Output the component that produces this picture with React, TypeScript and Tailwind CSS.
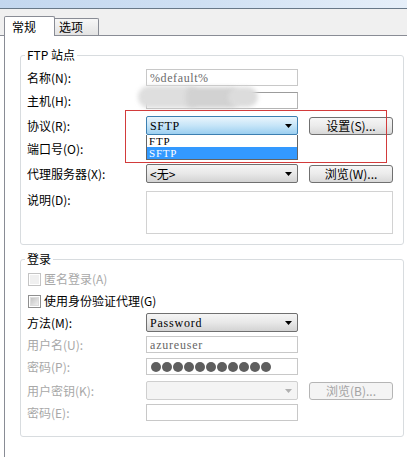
import React from "react";

const SERIF = { fontFamily: '"Liberation Serif", "DejaVu Serif", serif' };

const Arrow = ({ color = "#000" }: { color?: string }) => (
  <svg width="7" height="4" viewBox="0 0 7 4" className="shrink-0">
    <polygon points="0,0 7,0 3.5,4" fill={color} />
  </svg>
);

function Label({
  children,
  disabled,
  className = "",
}: {
  children: React.ReactNode;
  disabled?: boolean;
  className?: string;
}) {
  return (
    <span
      className={`w-[125px] shrink-0 pl-[6px] leading-[14px] whitespace-nowrap ${
        disabled ? "text-[#a8a8a8]" : "text-black"
      } ${className}`}
    >
      {children}
    </span>
  );
}

function Input({
  children,
  disabled,
}: {
  children?: React.ReactNode;
  disabled?: boolean;
}) {
  return (
    <div
      className={`w-[152px] h-[17px] flex items-center pl-[3px] border bg-white ${
        disabled ? "border-[#c8c8c8]" : "border-[#b4b4b4] border-t-[#9c9c9c]"
      }`}
    >
      {children}
    </div>
  );
}

function Select({
  children,
  variant = "normal",
}: {
  children?: React.ReactNode;
  variant?: "normal" | "active" | "disabled";
}) {
  const cls =
    variant === "active"
      ? "border-[#3c7fb1] bg-linear-to-b from-[#eaf5fc] via-[#c6e5f8] to-[#9ccff0]"
      : variant === "disabled"
      ? "border-[#cfcfcf] bg-[#f4f4f4]"
      : "border-[#707070] bg-linear-to-b from-[#f5f5f5] via-[#e8e8e8] to-[#d3d3d3]";
  return (
    <div
      className={`w-[152px] h-[19px] flex items-center justify-between pl-[3px] pr-[5px] border rounded-[2px] ${cls}`}
    >
      <div className="flex items-center">{children}</div>
      <Arrow color={variant === "disabled" ? "#b0b0b0" : "#000"} />
    </div>
  );
}

function Button({ children, disabled }: { children: React.ReactNode; disabled?: boolean }) {
  return (
    <div
      className={`ml-[11px] w-[84px] h-[18px] flex items-center justify-center border rounded-[3px] leading-[14px] ${
        disabled
          ? "border-[#b5b5b5] bg-[#f4f4f4] text-[#a3a3a3]"
          : "border-[#707070] bg-linear-to-b from-[#f6f6f6] via-[#ebebeb] to-[#d8d8d8] text-black"
      }`}
    >
      {children}
    </div>
  );
}

function Checkbox({ disabled }: { disabled?: boolean }) {
  return (
    <div
      className={`w-[13px] h-[13px] border flex items-center justify-center ${
        disabled ? "border-[#c4c4c4] bg-white" : "border-[#8f8f8f] bg-white"
      }`}
    >
      <div
        className={`w-[9px] h-[9px] ${
          disabled
            ? "bg-[#f0f0f0]"
            : "bg-linear-to-br from-[#c4c4c4] to-[#eeeeee] border border-[#dcdcdc]"
        }`}
      />
    </div>
  );
}

export default function App() {
  return (
    <div
      className="relative w-[407px] h-[457px] overflow-hidden bg-white flex flex-col text-[12px]"
      style={{ fontFamily: '"Noto Sans CJK SC", "Noto Sans", sans-serif' }}
    >
      {/* window top strip */}
      <div className="h-[9px] shrink-0 bg-linear-to-r from-[#c3d7ef] via-[#cfe0f3] to-[#e6eff9] border-b border-[#687888]" />

      {/* tab strip */}
      <div className="h-[27px] shrink-0 bg-[#f0f0f0] flex items-end pl-[4px] border-b border-[#898c95]">
        <div className="relative z-10 -mb-px w-[51px] h-[20px] bg-white border border-b-0 border-[#898c95] rounded-t-[2px] flex items-center pl-[7px] leading-[14px] text-black">
          常规
        </div>
        <div className="w-[44px] h-[17px] bg-linear-to-b from-[#f7f7f7] to-[#e3e3e3] border border-l-0 border-b-0 border-[#898c95] rounded-tr-[2px] flex items-center pl-[4px] leading-[14px] text-black">
          选项
        </div>
      </div>

      {/* panel */}
      <div className="flex-1 ml-[4px] border-l border-[#898c95] bg-white">
        {/* FTP site group */}
        <fieldset className="ml-[15px] mt-[12px] w-[384px] border border-[#d8dcdf] rounded-[3px] pb-[10px]">
          <legend className="ml-[4px] px-[2px] leading-[14px] text-black">FTP 站点</legend>

          <div className="flex items-center h-[17px] mt-[7px]">
            <Label>名称(N):</Label>
            <Input disabled>
              <span className="text-[12px] tracking-[0.6px] text-[#6a6a6a]" style={SERIF}>
                %default%
              </span>
            </Input>
          </div>

          <div className="flex items-center h-[17px] mt-[6px]">
            <Label>主机(H):</Label>
            <div className="relative">
              <Input />
              <div className="absolute left-[-8px] top-[-6px] w-[62px] h-[22px] rounded-full bg-[#dedede] blur-[2px]" />
              <div className="absolute left-[40px] top-[-5px] w-[52px] h-[21px] rounded-[6px] bg-[#d2d2d2] blur-[2px]" />
              <div className="absolute left-[82px] top-[-5px] w-[30px] h-[20px] rounded-full bg-[#dcdcdc] blur-[2px]" />
            </div>
          </div>

          <div className="flex items-center h-[19px] mt-[7px]">
            <Label>协议(R):</Label>
            <div className="relative">
              <Select variant="active">
                <span className="text-[12px] tracking-[0.6px] text-black" style={SERIF}>
                  SFTP
                </span>
              </Select>
              <div className="absolute left-0 top-full z-20 w-[152px] border border-t-0 border-[#646464] bg-white">
                <div
                  className="h-[12px] leading-[12px] pl-[2px] text-[11px] tracking-[0.8px] text-black overflow-hidden"
                  style={SERIF}
                >
                  FTP
                </div>
                <div
                  className="h-[12px] leading-[12px] pl-[2px] text-[11px] tracking-[0.8px] text-white bg-[#3399ff] overflow-hidden"
                  style={SERIF}
                >
                  SFTP
                </div>
              </div>
            </div>
            <Button>设置(S)...</Button>
          </div>

          <div className="flex items-center h-[19px] mt-[4px]">
            <Label>端口号(O):</Label>
            <Input />
          </div>

          <div className="flex items-center h-[19px] mt-[6px]">
            <Label>代理服务器(X):</Label>
            <Select>
              <span className="text-black">&lt;无&gt;</span>
            </Select>
            <Button>浏览(W)...</Button>
          </div>

          <div className="flex items-start h-[43px] mt-[8px]">
            <Label className="pt-[2px]">说明(D):</Label>
            <div className="w-[247px] h-[43px] border border-[#d2d2d2] bg-white" />
          </div>
        </fieldset>

        {/* Login group */}
        <fieldset className="ml-[15px] mt-[7px] w-[384px] border border-[#d8dcdf] rounded-[3px] pb-[15px]">
          <legend className="ml-[4px] px-[2px] leading-[14px] text-black">登录</legend>

          <div className="flex items-center h-[14px] mt-[6px] pl-[7px]">
            <Checkbox disabled />
            <span className="ml-[3px] leading-[14px] text-[#a8a8a8]">匿名登录(A)</span>
          </div>

          <div className="flex items-center h-[14px] mt-[8px] pl-[7px]">
            <Checkbox />
            <span className="ml-[3px] leading-[14px] text-black">使用身份验证代理(G)</span>
          </div>

          <div className="flex items-center h-[19px] mt-[5px]">
            <Label>方法(M):</Label>
            <Select>
              <span className="text-[12px] tracking-[0.8px] text-black" style={SERIF}>
                Password
              </span>
            </Select>
          </div>

          <div className="flex items-center h-[17px] mt-[4px]">
            <Label disabled>用户名(U):</Label>
            <Input disabled>
              <span className="text-[12px] tracking-[0.8px] text-[#666]" style={SERIF}>
                azureuser
              </span>
            </Input>
          </div>

          <div className="flex items-center h-[17px] mt-[5px]">
            <Label disabled>密码(P):</Label>
            <Input disabled>
              <div className="flex gap-[1px] pl-[1px]">
                {Array.from({ length: 11 }).map((_, i) => (
                  <div key={i} className="w-[10px] h-[10px] rounded-full bg-[#5e5e5e]" />
                ))}
              </div>
            </Input>
          </div>

          <div className="flex items-center h-[19px] mt-[6px]">
            <Label disabled>用户密钥(K):</Label>
            <Select variant="disabled" />
            <Button disabled>浏览(B)...</Button>
          </div>

          <div className="flex items-center h-[17px] mt-[4px]">
            <Label disabled>密码(E):</Label>
            <Input disabled />
          </div>
        </fieldset>
      </div>

      {/* red annotation rectangle */}
      <div className="absolute left-[125px] top-[110px] w-[262px] h-[53px] border border-[#d23b3b] z-30 pointer-events-none" />
    </div>
  );
}
